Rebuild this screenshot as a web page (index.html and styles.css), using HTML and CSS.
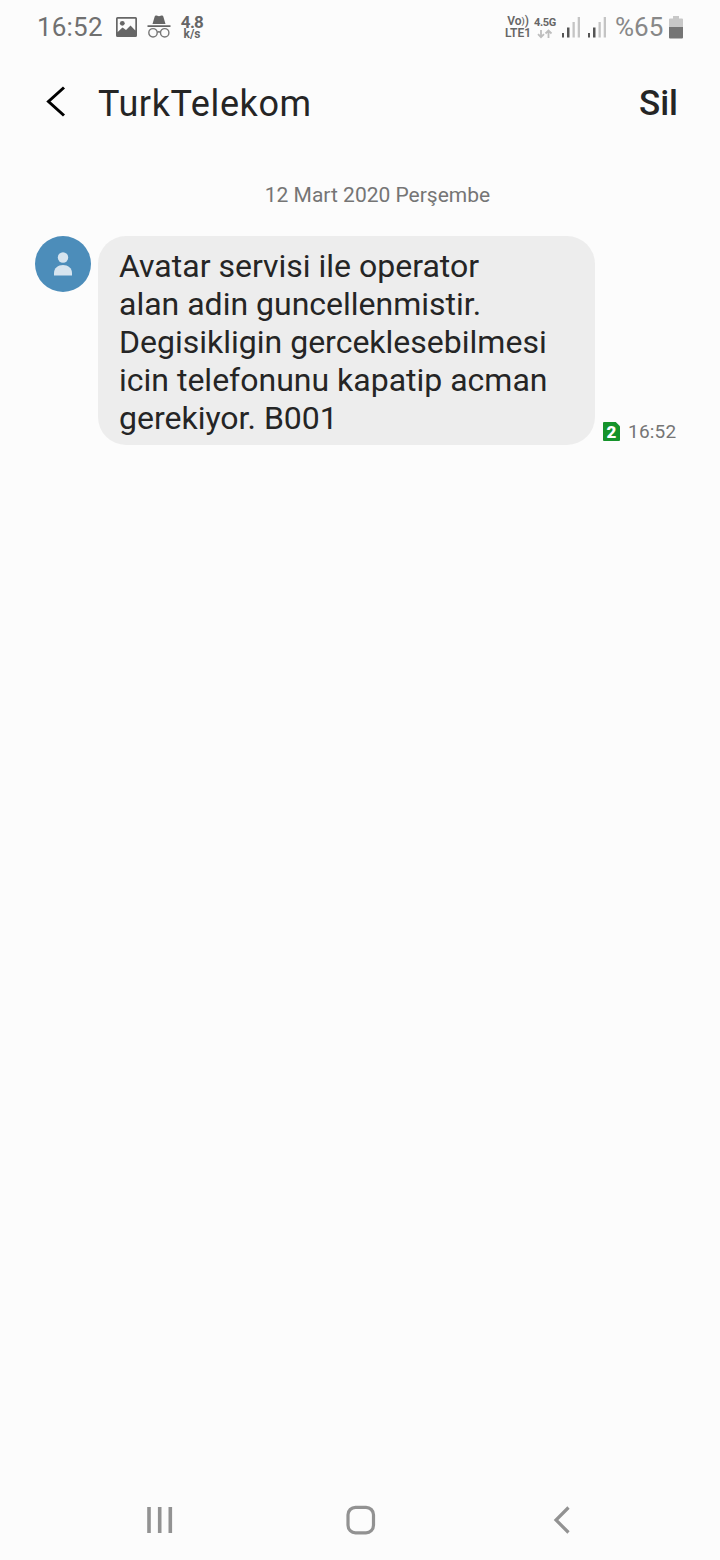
FILE: index.html
```
<!DOCTYPE html>
<html lang="tr">
<head>
    <meta charset="UTF-8">
    <meta name="viewport" content="width=device-width, initial-scale=1.0">
    <title>TurkTelekom</title>
    <link rel="stylesheet" href="styles.css">
</head>
<body>
    <div class="status-bar">
        <span class="clock">16:52</span>
        <svg class="icon-image" width="21" height="20" viewBox="0 0 21 20">
            <path fill="#666" fill-rule="evenodd" d="M1.500 0h18A1.500 1.500 0 0 1 21 1.500v17a1.500 1.500 0 0 1-1.500 1.500h-18A1.500 1.500 0 0 1 0 18.500v-17A1.500 1.500 0 0 1 1.500 0zM1.700 1.700V15l4.800-4.500 3.500 2.500 4.500-4.500 4.800 5V1.700z"/>
            <circle cx="6.300" cy="6.300" r="2.400" fill="#666"/>
        </svg>
        <svg class="icon-incognito" width="24" height="24" viewBox="0 0 24 24">
            <path fill="#666" d="M5.500 9l2.200-7.500Q8.200 0 9.500.5l2.500.8 2.500-.8q1.300-.5 1.800 1L18.500 9zM.5 10.200h23V12H.5z"/>
            <g fill="none" stroke="#777" stroke-width="1.400">
                <circle cx="6" cy="17.800" r="4.200"/>
                <circle cx="17.700" cy="17.800" r="4.200"/>
                <path d="M10.200 17.300q1.700-1 3.400 0"/>
            </g>
        </svg>
        <div class="speed">
            <span class="speed-value">4.8</span>
            <span class="speed-unit">k/s</span>
        </div>

        <div class="volte">
            <span>Vo<small>)</small>)</span>
            <span>LTE1</span>
        </div>
        <div class="network">
            <span>4.5G</span>
            <svg width="16" height="10" viewBox="0 0 16 10">
                <path fill="none" stroke="#bebebe" stroke-width="1.800" d="M4 1v7.500M1 5.200l3 3 3-3M11.500 9V1.500M8.500 4.500l3-3 3 3"/>
            </svg>
        </div>
        <svg class="signal" width="18" height="21" viewBox="0 0 18 21">
            <path fill="#555" d="M0 16h2v4.500H0zM5 10.500h2.500v10H5z"/>
            <path fill="#c4c4c4" d="M10.500 5h2.300v15.500h-2.300zM15.700 0H18v20.500h-2.300z"/>
        </svg>
        <svg class="signal" width="18" height="21" viewBox="0 0 18 21">
            <path fill="#555" d="M0 16h2v4.500H0zM5 10.500h2.500v10H5z"/>
            <path fill="#c4c4c4" d="M10.500 5h2.300v15.500h-2.300zM15.700 0H18v20.500h-2.300z"/>
        </svg>
        <span class="battery-text">%65</span>
        <svg class="battery" width="14" height="23" viewBox="0 0 14 23">
            <path fill="#c8c8c8" d="M4 0h6v2.500h3a1 1 0 0 1 1 1V12H0V3.500a1 1 0 0 1 1-1h3z"/>
            <path fill="#757575" d="M0 11h14v10.500a1 1 0 0 1-1 1H1a1 1 0 0 1-1-1z"/>
        </svg>
    </div>

    <header>
        <svg class="back" width="20" height="32" viewBox="0 0 20 32">
            <path fill="none" stroke="#000" stroke-width="3" d="M18 1.500L2.500 15.500 18 29.500"/>
        </svg>
        <h1>TurkTelekom</h1>
        <button class="delete">Sil</button>
    </header>

    <main>
        <div class="date">12 Mart 2020 Perşembe</div>
        <div class="message">
            <div class="avatar">
                <svg width="18" height="24" viewBox="0 0 18 24">
                    <circle cx="9" cy="5.500" r="5.200" fill="#d6e4ef"/>
                    <path fill="#d6e4ef" d="M0 23.500V21c0-5 4-8 9-8s9 3 9 8v2.500z"/>
                </svg>
            </div>
            <p class="bubble">Avatar servisi ile operator<br>alan adin guncellenmistir.<br>Degisikligin gerceklesebilmesi<br>icin telefonunu kapatip acman<br>gerekiyor. B001</p>
            <div class="meta">
                <span class="sim">2</span>
                <span class="time">16:52</span>
            </div>
        </div>
    </main>

    <nav>
        <svg width="26" height="28" viewBox="0 0 26 28">
            <path stroke="#929292" stroke-width="3.600" d="M2 1v26M12.700 1v26M23.300 1v26"/>
        </svg>
        <svg class="home" width="30" height="30" viewBox="0 0 30 30">
            <rect x="2" y="2.300" width="25.500" height="25.500" rx="7.500" fill="none" stroke="#929292" stroke-width="3.200"/>
        </svg>
        <svg width="18" height="28" viewBox="0 0 18 28">
            <path fill="none" stroke="#929292" stroke-width="3.200" d="M15.500 1.500L3 14l12.500 12.500"/>
        </svg>
    </nav>
</body>
</html>
```

FILE: styles.css
```
* {
    box-sizing: border-box;
}

body {
    margin: 0;
    height: 100vh;
    display: flex;
    flex-direction: column;
    font-family: Roboto, sans-serif;
    background-color: #fcfcfc;
    color: #252525;
}

svg {
    display: block;
    flex: none;
}

.status-bar {
    height: 54px;
    padding: 0 37px 0 37px;
    display: flex;
    align-items: center;
    color: #666;
    white-space: nowrap;
}

.clock {
    width: 79px;
    font-size: 26px;
    letter-spacing: 0.2px;
    color: #707070;
}

.icon-incognito {
    margin-left: 10px;
}

.speed {
    width: 24px;
    margin-left: 9px;
    display: flex;
    flex-direction: column;
    align-items: center;
    font-weight: 700;
}

.speed-value {
    font-size: 17px;
    line-height: 14px;
    letter-spacing: -0.7px;
}

.speed-unit {
    font-size: 12px;
    line-height: 11px;
}

.volte {
    width: 28px;
    margin-left: auto;
    display: flex;
    flex-direction: column;
    align-items: center;
    font-size: 12px;
    font-weight: 600;
    line-height: 12px;
}

.volte small {
    font-size: 9px;
    line-height: 1;
    vertical-align: 1px;
}

.network {
    width: 24px;
    margin-left: 1px;
    display: flex;
    flex-direction: column;
    align-items: center;
    font-size: 11px;
    font-weight: 700;
    line-height: 13px;
    letter-spacing: -0.3px;
}

.signal {
    margin-left: 5px;
}

.signal + .signal {
    margin-left: 8px;
}

.battery-text {
    margin-left: 9px;
    width: 54px;
    font-size: 26px;
    color: #888;
}

header {
    height: 98px;
    padding: 1px 42px 0 46px;
    display: flex;
    align-items: center;
}

.back {
    margin-bottom: 3px;
}

h1 {
    margin: 0 0 0 32px;
    flex: 1;
    font-size: 36px;
    font-weight: 400;
    letter-spacing: 0.6px;
}

.delete {
    padding: 0;
    border: none;
    background: none;
    font: 500 35px Roboto, sans-serif;
    color: #252525;
}

main {
    flex: 1;
    padding: 30px 43px 0 35px;
}

.date {
    padding-left: 43px;
    font-size: 21px;
    line-height: 26px;
    text-align: center;
    color: #757575;
}

.message {
    margin-top: 28px;
    display: flex;
    align-items: flex-start;
}

.avatar {
    width: 56px;
    height: 56px;
    border-radius: 50%;
    display: flex;
    align-items: center;
    justify-content: center;
    background-color: #4c8dba;
}

.bubble {
    width: 497px;
    height: 209px;
    margin: 0 0 0 7px;
    padding: 11px 21px;
    border-radius: 28px;
    background-color: #ededed;
    font-size: 32px;
    line-height: 38px;
    white-space: nowrap;
}

.meta {
    align-self: flex-end;
    margin-left: 8px;
    padding-bottom: 2px;
    display: flex;
    align-items: center;
    color: #757575;
}

.sim {
    width: 17px;
    height: 19px;
    margin-bottom: 1px;
    border-radius: 1px;
    clip-path: polygon(0 0, 75% 0, 100% 22%, 100% 100%, 0 100%);
    background-color: #15932b;
    color: #fff;
    font-size: 17px;
    font-weight: 900;
    line-height: 20px;
    text-align: center;
}

.time {
    margin-left: 8px;
    font-size: 19px;
    line-height: 22px;
    letter-spacing: 0.2px;
}

nav {
    height: 79px;
    padding: 0 149px 1px 147px;
    display: flex;
    align-items: center;
    justify-content: space-between;
}

.home {
    margin-right: 4px;
}
```
